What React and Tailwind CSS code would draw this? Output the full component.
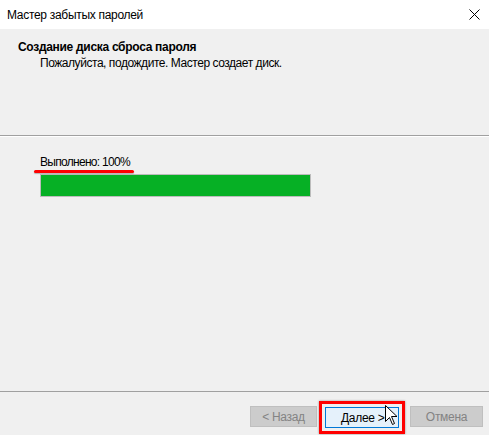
import React from 'react';

const font = { fontFamily: '"Liberation Sans", Arial, sans-serif' };

// mouse pointer over the "Next" button
const Cursor = () => (
    <svg width="13" height="21" viewBox="0 0 13 21" className="absolute left-[385px] top-[405px]">
        <path
            d="M0.5 0.5 L0.5 16.5 L4.5 12.5 L7.5 19.5 L9.5 18.5 L6.5 11.5 L12 11.5 Z"
            fill="#ffffff"
            stroke="#000000"
            strokeWidth="1"
            strokeLinejoin="miter"
        />
    </svg>
);

const App = () => {
    return (
        <div className="relative w-[489px] h-[435px] bg-[#f0f0f0] flex flex-col text-[12px] tracking-[-0.3px] text-black overflow-hidden" style={font}>
            {/* Title bar */}
            <div className="h-[29px] bg-white flex items-center justify-between pl-[7px] pr-[9px]">
                <span className="leading-none">Мастер забытых паролей</span>
                <svg width="11" height="11" viewBox="0 0 11 11">
                    <path d="M0.5 0.5 L10.5 10.5 M10.5 0.5 L0.5 10.5" stroke="#000" strokeWidth="1" />
                </svg>
            </div>

            {/* Header */}
            <div className="h-[107px] border-b border-[#a0a0a0] pt-[10px] pl-[18px]">
                <div className="font-bold leading-[16px]">Создание диска сброса пароля</div>
                <div className="pl-[22px] leading-[16px] tracking-[-0.45px]">Пожалуйста, подождите. Мастер создает диск.</div>
            </div>

            {/* Content */}
            <div className="flex-1 border-t border-white pl-[40px] pt-[18px]">
                <div className="relative w-fit leading-[15px] tracking-[-0.7px]">
                    Выполнено: 100%
                    <div className="absolute left-[-6px] w-[100px] top-[15px] h-[3px] bg-[#ff0000] rounded-full shadow-[0_1px_1px_rgba(0,0,0,0.25)]" />
                </div>
                <div className="mt-[4px] w-[271px] h-[23px] border border-[#bcbcbc] bg-[#e6e6e6]">
                    <div className="h-full bg-[#06b025]" style={{ width: '100%' }} />
                </div>
            </div>

            {/* Footer */}
            <div className="h-[44px] border-t border-[#a0a0a0] flex items-start pt-[14px] pl-[250px]">
                <button disabled className="w-[67px] h-[21px] border border-[#bfbfbf] bg-[#cccccc] text-[#838383] leading-none">
                    &lt; Назад
                </button>
                <div className="ml-[2px] -mt-[5px] border-[3px] border-[#ff0000] p-[3px] shadow-[0_0_2px_rgba(0,0,0,0.4)]">
                    <button className="w-[74px] h-[21px] border border-[#0078d7] bg-[#e5f1fb] text-black leading-none text-left pl-[15px]">
                        Далее &gt;
                    </button>
                </div>
                <button disabled className="ml-[5px] w-[73px] h-[21px] border border-[#bfbfbf] bg-[#cccccc] text-[#838383] leading-none">
                    Отмена
                </button>
            </div>

            <Cursor />
        </div>
    );
};

export default App;
